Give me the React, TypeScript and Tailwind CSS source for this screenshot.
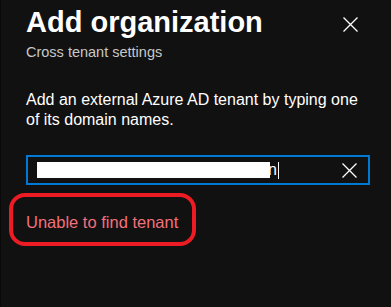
function Cross({ size }: { size: number }) {
  return (
    <svg width={size} height={size} viewBox={`0 0 ${size} ${size}`} fill="none" stroke="currentColor" strokeWidth={1.3}>
      <path d={`M0.5 0.5L${size - 0.5} ${size - 0.5}M${size - 0.5} 0.5L0.5 ${size - 0.5}`} />
    </svg>
  );
}

export default function App() {
  return (
    <div
      className="w-[391px] h-[307px] overflow-hidden bg-[#111111] border-l border-[#080808] text-white"
      style={{ fontFamily: '"Liberation Sans", Arial, sans-serif' }}
    >
      <div className="pl-[25px] pr-[21px]">
        {/* Header */}
        <div className="flex items-start justify-between pt-[4px]">
          <div>
            <h1 className="text-[29px] leading-[36px] font-bold">Add organization</h1>
            <p className="mt-[2px] text-[14.5px] leading-[20px] text-[#c8c8c8]">Cross tenant settings</p>
          </div>
          <button className="mt-[13px] mr-[12px] text-white">
            <Cross size={15} />
          </button>
        </div>

        {/* Body */}
        <p className="mt-[28px] text-[16px] leading-[20px] text-white">
          Add an external Azure AD tenant by typing one of its domain names.
        </p>

        <div className="mt-[25px] h-[30px] border-2 border-[#0078d4] flex items-center pl-[9px] pr-[11px]">
          <div className="flex items-center flex-1">
            <div className="w-[233px] h-[16px] bg-white" />
            <span className="text-[16px] leading-[16px] text-white -ml-[2px]">n</span>
            <div className="w-[1px] h-[17px] bg-white ml-[1px]" />
          </div>
          <div className="text-white">
            <Cross size={15} />
          </div>
        </div>

        {/* Error */}
        <div className="relative mt-[27px] w-fit">
          <p className="text-[16.5px] leading-[20px] text-[#f1707b]">Unable to find tenant</p>
          <div className="absolute -left-[17px] -top-[19px] w-[187px] h-[53px] border-4 border-[#ed1c24] rounded-[16px]" />
        </div>
      </div>
    </div>
  );
}
